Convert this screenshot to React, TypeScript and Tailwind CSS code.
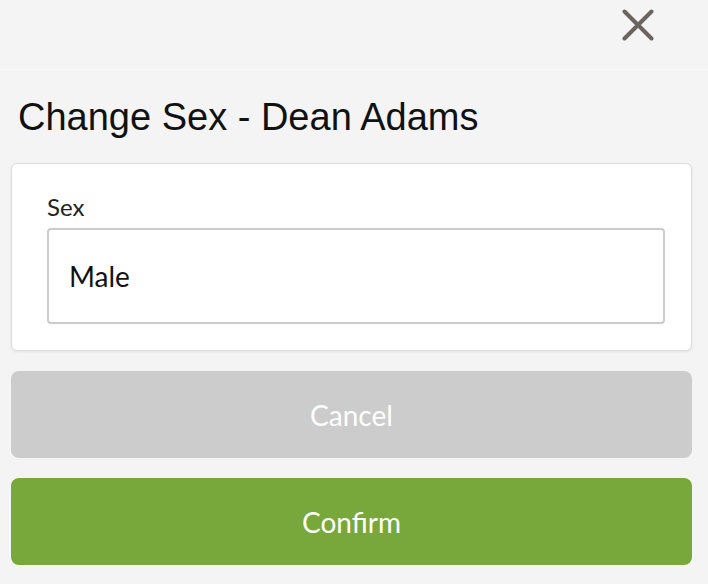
export default function App() {
  return (
    <div className="min-h-[584px] w-full bg-[#f4f4f4] font-['Lato',sans-serif]">
      {/* top bar */}
      <div className="flex h-[70px] items-start justify-end border-b border-[#f8f8f8] pr-[54px] pt-[9px]">
        <svg width="32" height="32" viewBox="0 0 32 32" fill="none">
          <path
            d="M2.5 2.5L29.5 29.5M29.5 2.5L2.5 29.5"
            stroke="#6b635e"
            strokeWidth="4"
            strokeLinecap="round"
          />
        </svg>
      </div>

      <div className="pl-[11px] pr-[16px] pt-[25px] pb-[19px]">
        <h1 className="pl-[7px] font-['Liberation_Sans',sans-serif] text-[38px] leading-[44px] text-[#111]">
          Change Sex - Dean Adams
        </h1>

        <div className="mt-[24px] rounded-[6px] border border-[#dddddd] bg-white pl-[35px] pr-[26px] pt-[28px] pb-[26px] shadow-[0_1px_3px_rgba(0,0,0,0.08)]">
          <label className="block text-[24px] leading-[30px] text-[#222]">Sex</label>
          <div className="mt-[6px] flex h-[96px] items-center rounded-[4px] border-2 border-[#cccccc] px-[20px] text-[28px] text-[#111]">
            Male
          </div>
        </div>

        <button className="mt-[20px] flex h-[87px] w-full items-center justify-center rounded-[8px] bg-[#cccccc] text-[28px] text-white">
          Cancel
        </button>
        <button className="mt-[20px] flex h-[87px] w-full items-center justify-center rounded-[8px] bg-[#78a83c] text-[28px] text-white">
          Confirm
        </button>
      </div>
    </div>
  );
}
